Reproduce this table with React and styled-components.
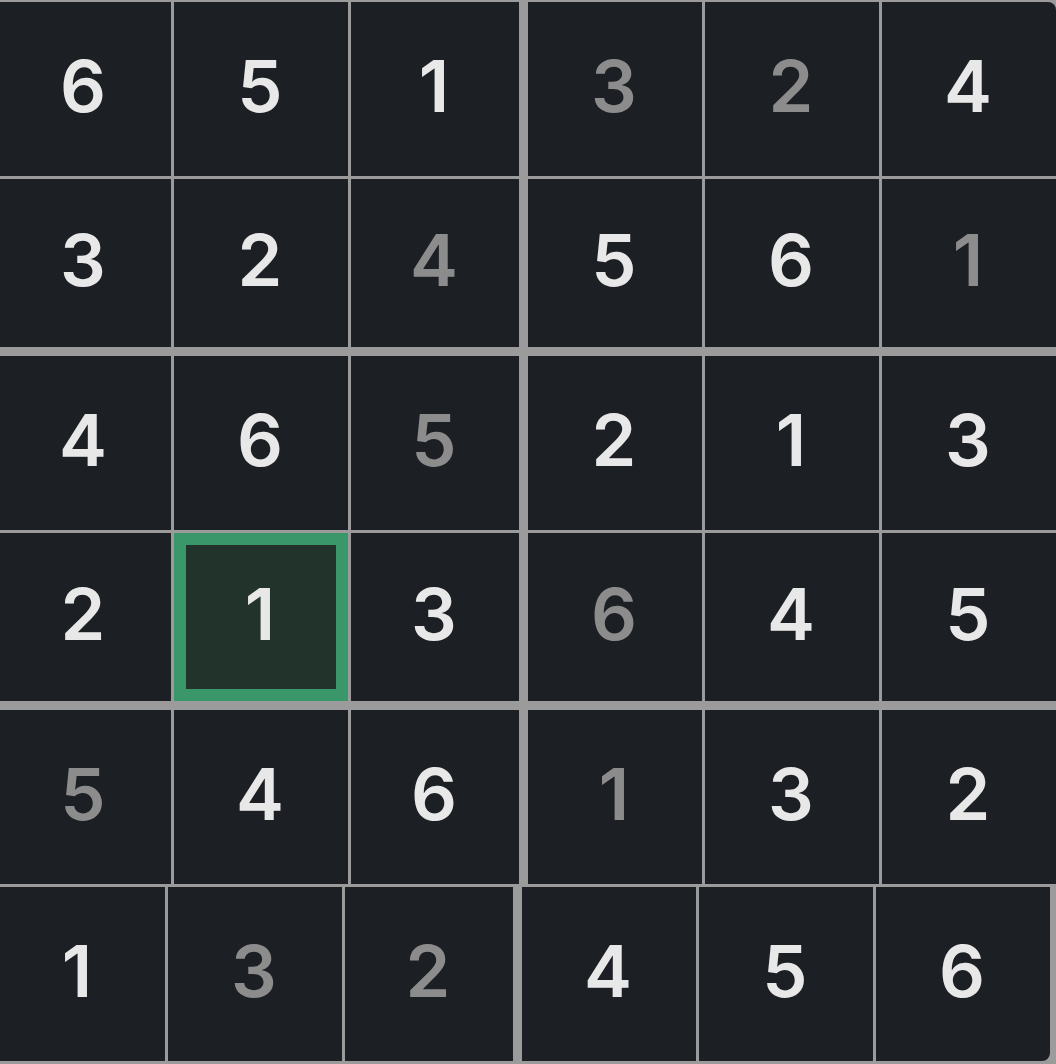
import React from "react";
import styled, { createGlobalStyle, css } from "styled-components";

const GlobalStyle = createGlobalStyle`
  html, body {
    margin: 0;
    padding: 0;
    height: 1064px;
    overflow: hidden;
    background: #9b9b9b;
  }
  #root { height: 100%; }
`;

const Board = styled.div`
  display: flex;
  flex-direction: column;
  gap: 3px;
  padding-top: 2px;
  margin-left: -9px;
  background: #9b9b9b;
  font-family: Inter, "Noto Sans", "Liberation Sans", sans-serif;
`;

const Row = styled.div`
  display: grid;
  grid-template-columns: repeat(6, 174px);
  column-gap: 3px;
  padding-left: ${(p) => (p.$inset ? "6px" : "0")};
`;

const Cell = styled.div`
  box-sizing: border-box;
  height: 174px;
  display: flex;
  background: #9b9b9b;
  padding-right: ${(p) => (p.$thickRight ? "6px" : "0")};
  padding-bottom: ${(p) => (p.$thickBottom ? "6px" : "0")};
`;

const Face = styled.div`
  box-sizing: border-box;
  flex: 1;
  display: flex;
  align-items: center;
  justify-content: center;
  padding: 0 2px 6px 0;
  background: #1c1f24;
  color: ${(p) => (p.$dim ? "#8c8c8c" : "#e8e8e8")};
  font-size: 72px;
  font-weight: 600;
  line-height: 1;
  ${(p) =>
    p.$selected &&
    css`
      border: 12px solid #3a9769;
      background: #22332b;
    `}
  ${(p) => p.$corner === "tr" && css`border-top-right-radius: 8px;`}
  ${(p) => p.$corner === "br" && css`border-bottom-right-radius: 8px;`}
`;

// value, dim flag, selected flag
const grid = [
  [[6], [5], [1], [3, 1], [2, 1], [4]],
  [[3], [2], [4, 1], [5], [6], [1, 1]],
  [[4], [6], [5, 1], [2], [1], [3]],
  [[2], [1, 0, 1], [3], [6, 1], [4], [5]],
  [[5, 1], [4], [6], [1, 1], [3], [2]],
  [[1], [3, 1], [2, 1], [4], [5], [6]],
];

export default function App() {
  return (
    <>
      <GlobalStyle />
      <Board>
        {grid.map((row, r) => (
          <Row key={r} $inset={r < 5}>
            {row.map(([v, dim, sel], c) => {
              let corner = null;
              if (r === 0 && c === 5) corner = "tr";
              if (r === 5 && c === 5) corner = "br";
              return (
                <Cell key={c} $thickRight={c === 2} $thickBottom={r === 1 || r === 3}>
                  <Face $dim={!!dim} $selected={!!sel} $corner={corner}>
                    {v}
                  </Face>
                </Cell>
              );
            })}
          </Row>
        ))}
      </Board>
    </>
  );
}
